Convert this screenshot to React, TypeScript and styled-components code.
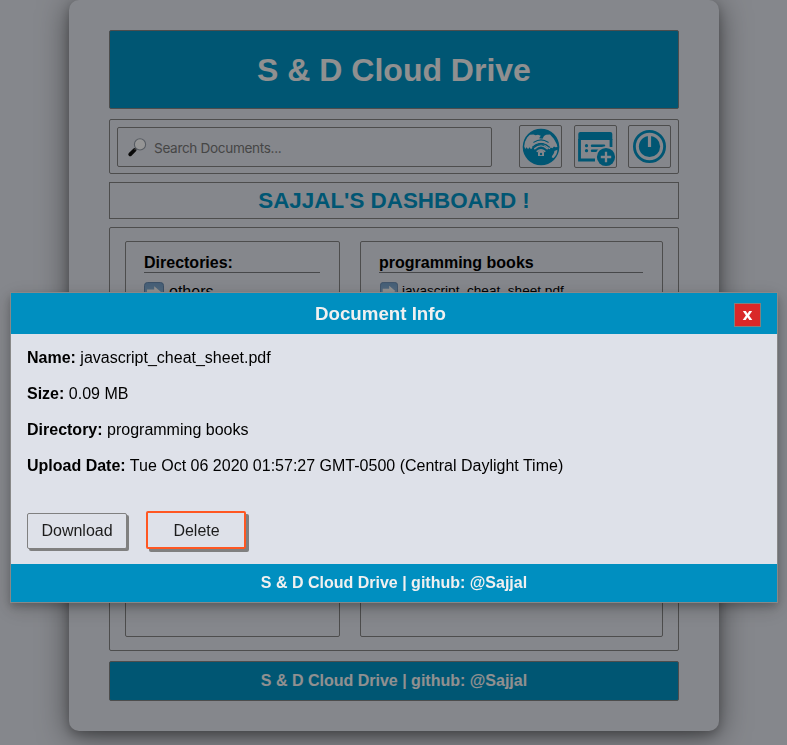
import React from 'react';
import styled, { createGlobalStyle } from 'styled-components';

const BLUE = '#008fc0';
const PAPER = '#dee1e9';

const GlobalStyle = createGlobalStyle`
  * { box-sizing: border-box; }
  html, body { margin: 0; padding: 0; }
  body {
    height: 745px;
    overflow: hidden;
    background: ${PAPER};
    color: #000;
    font: 16px/20px "Liberation Sans", Helvetica, Arial, sans-serif;
  }
  h1, h2, h3, h4, p { margin: 0; }
`;

const Card = styled.main`
  width: 650px;
  height: 731px;
  margin-left: 69px;
  padding: 30px 40px;
  display: flex;
  flex-direction: column;
  background: ${PAPER};
  border-radius: 10px;
  box-shadow: 0 5px 30px rgba(0, 0, 0, 0.5), 0 4px 10px rgba(0, 0, 0, 0.2);
`;

const Box = styled.section`
  border: 1px solid gray;
  border-radius: 2px;
`;

const Banner = styled(Box).attrs({ as: 'header' })`
  height: 79px;
  display: flex;
  align-items: center;
  justify-content: center;
  background: ${BLUE};
  color: #f0f0f0;
`;

const SiteTitle = styled.h1`
  font-size: 32px;
  line-height: 38px;
`;

const Toolbar = styled(Box)`
  height: 55px;
  margin-top: 10px;
  padding: 0 7px;
  display: flex;
  align-items: center;
`;

const Search = styled.label`
  width: 375px;
  height: 40px;
  margin-right: auto;
  padding-left: 9px;
  display: flex;
  align-items: center;
  gap: 7px;
  border: 1px solid gray;
  border-radius: 2px;
`;

const SearchInput = styled.input`
  flex: 1;
  padding: 2px 0 0;
  border: 0;
  outline: 0;
  background: transparent;
  font: 13.6px/20px Inter, sans-serif;
  letter-spacing: -0.34px;
  &::placeholder { color: #757575; opacity: 1; }
`;

const Tools = styled.nav`
  display: grid;
  grid-template-columns: 43px 43px 43px;
  column-gap: 11.5px;
`;

const ToolButton = styled.button`
  height: 43px;
  padding: 0;
  display: grid;
  place-items: center;
  border: 1px solid gray;
  border-radius: 2px;
  background: transparent;
`;

const Dashboard = styled(Box)`
  height: 37px;
  margin-top: 8px;
  border-radius: 0;
  text-align: center;
`;

const DashboardTitle = styled.h2`
  font-size: 22.4px;
  line-height: 35px;
  color: ${BLUE};
`;

const Panels = styled(Box)`
  height: 424px;
  margin-top: 8px;
  padding: 13px 15px;
  display: grid;
  grid-template-columns: 215px 303px;
  gap: 20px;
`;

const Panel = styled(Box)`
  padding: 12px 18px;
`;

const PanelTitle = styled.h4`
  height: 19px;
  width: calc(100% - 1px);
  line-height: 18px;
  border-bottom: 1px solid #77787c;
`;

const Entry = styled.div<{ $small?: boolean }>`
  margin-top: ${(p) => (p.$small ? 7 : 8)}px;
  padding-left: ${(p) => (p.$small ? 1 : 0)}px;
  display: flex;
  align-items: center;
  gap: ${(p) => (p.$small ? 4 : 5)}px;
  font-size: ${(p) => (p.$small ? 13.6 : 16)}px;
  line-height: 20px;
`;

const EntryName = styled.span`
  padding-top: 1px;
`;

const Footer = styled(Box).attrs({ as: 'footer' })`
  height: 40px;
  margin-top: 10px;
  background: ${BLUE};
  color: #f0f0f0;
  font-weight: bold;
  line-height: 37px;
  text-align: center;
`;

const Overlay = styled.div`
  position: fixed;
  inset: 0;
  padding: 292px 9px 0 10px;
  background: rgba(0, 0, 0, 0.4);
`;

const Dialog = styled.div`
  height: 311px;
  display: flex;
  flex-direction: column;
  border: 1px solid #888;
  background: ${PAPER};
  box-shadow: 0 4px 8px rgba(0, 0, 0, 0.2), 0 6px 20px rgba(0, 0, 0, 0.19);
`;

const DialogHeader = styled.header`
  height: 41px;
  padding: 0 16px;
  display: grid;
  grid-template-columns: 27px 1fr 27px;
  align-items: center;
  background: ${BLUE};
  color: #f0f0f0;
`;

const DialogTitle = styled.h3`
  grid-column: 2;
  padding-right: 27px;
  font-size: 18.72px;
  line-height: 22px;
  text-align: center;
`;

const CloseButton = styled.button`
  width: 27px;
  height: 24px;
  margin-top: 3px;
  padding: 0;
  border: 1px solid gray;
  background: #d92828;
  color: #fff;
  font: bold 15.5px/20px "DejaVu Sans", sans-serif;
`;

const DialogBody = styled.div`
  flex: 1;
  padding: 15px 16px 0;
`;

const Field = styled.p`
  height: 36px;
  line-height: 18px;
`;

const Actions = styled.div`
  margin-top: 18px;
  display: flex;
  align-items: flex-end;
  gap: 19px;
`;

const ActionButton = styled.button<{ $danger?: boolean }>`
  width: 100px;
  height: ${(p) => (p.$danger ? 38 : 36)}px;
  padding: ${(p) => (p.$danger ? '2px 0 0 1px' : '0')};
  border: ${(p) => (p.$danger ? '2px solid #ff5722' : '1px solid gray')};
  border-radius: 2px;
  background: ${PAPER};
  box-shadow: ${(p) => (p.$danger ? '3px 3px gray' : '2px 2px gray')};
  color: #1c1c1c;
  font: 16px/20px "Liberation Sans", Helvetica, Arial, sans-serif;
`;

const DialogFooter = styled.footer`
  height: 38px;
  background: ${BLUE};
  color: #f0f0f0;
  font-weight: bold;
  line-height: 38px;
  text-align: center;
`;

const LensIcon = () => (
  <svg width="20" height="20" viewBox="0 0 20 20">
    <path d="M3.2 17.3 7.6 13" stroke="#111" strokeWidth="3.8" strokeLinecap="round" />
    <path d="m7.5 12.8 2-2" stroke="#555" strokeWidth="1.8" />
    <circle cx="13" cy="7.4" r="5.6" fill="#f8f8f8" stroke="#929aa5" strokeWidth="1.1" />
    <path d="M9 6c1-2.3 3.5-3 5.5-2" fill="none" stroke="#fff" />
  </svg>
);

const ArrowIcon = ({ size }: { size: number }) => (
  <svg width={size} height={size} viewBox="0 0 20 20">
    <defs>
      <linearGradient id="tile" x2="0" y2="1">
        <stop stopColor="#719bc5" />
        <stop offset="1" stopColor="#a3c5e0" />
      </linearGradient>
    </defs>
    <rect x=".5" y=".5" width="19" height="19" rx="3" fill="url(#tile)" stroke="#6385aa" />
    <path d="M3 7.4h7.2V4.2L17 10l-6.8 5.8v-3.2H3z" fill="#f1f1f1" />
  </svg>
);

const GlobeIcon = () => (
  <svg width="38" height="38" viewBox="0 0 38 38">
    <circle cx="19" cy="19" r="18.3" fill={BLUE} />
    <path
      d="M5.2 9.5 7.8 6.8l3.7-.3 2 .8 2.5-.6 2.8 1.1-1.7 2.5 3.4.4 1.5-2.7 2-1.2 4-.3 3.8 4.3 3 5.5.6 2.7-2 .3-1.4-.8-1.6 1.8-1.7-.7-1 1.6-1.9-1-5-4-6 .1-4.6 3.8-1.2 1.2-1.6-2-1.3 2-1.5-2-1.4 1.8L2.2 18.3l.8-4.5z"
      fill={PAPER}
    />
    <path d="M29.8 29.6c.2-3.2 2.2-2.4 2.6-6.6l3-1.2c0 3.6-1.6 6.3-3.8 8.1z" fill={PAPER} />
    <g fill="none" strokeLinecap="round">
      <path d="M12 14.3c4.4-3 9.6-3 14 0" stroke={BLUE} strokeWidth="1.3" />
      <path d="M10.7 19c5-4.7 11.6-4.7 16.6 0" stroke={BLUE} strokeWidth="1.5" />
      <path d="M10.5 17.4c5-4.7 12-4.7 17 0" stroke={PAPER} strokeWidth="1.6" />
      <path d="M12.8 20.6c3.8-3.5 8.6-3.5 12.4 0M15.2 23.3c2.5-2.1 5.1-2.1 7.6 0" stroke={PAPER} strokeWidth="1.6" />
    </g>
    <path d="M16 28v-2.9a3 3 0 0 1 6 0V28z" fill={PAPER} />
    <circle cx="19" cy="26" r="1.2" fill={BLUE} />
  </svg>
);

const FormIcon = () => (
  <svg width="41" height="41" viewBox="0 0 41 41">
    <path d="M4.5 13v21H20M36 13v8" fill="none" stroke={BLUE} strokeWidth="2.8" />
    <path d="M3.3 14V8a2 2 0 0 1 2-2h30a2 2 0 0 1 2 2v6z" fill={BLUE} />
    <path d="M17 19.7h12M17 24.7h7" stroke={BLUE} strokeWidth="2.5" strokeLinecap="round" />
    <circle cx="11.5" cy="19.7" r="1.6" fill={BLUE} />
    <circle cx="11.5" cy="24.7" r="1.6" fill={BLUE} />
    <circle cx="31" cy="31" r="10.8" fill={PAPER} />
    <circle cx="31" cy="31" r="9.1" fill={BLUE} />
    <path d="M31 25.8v10.4M25.8 31h10.4" stroke={PAPER} strokeWidth="2.3" />
  </svg>
);

const PowerIcon = () => (
  <svg width="33" height="33" viewBox="0 0 33 33">
    <circle cx="16.5" cy="16.5" r="15.1" fill="none" stroke={BLUE} strokeWidth="2.8" />
    <circle cx="16.5" cy="16.5" r="10.6" fill={BLUE} />
    <path d="M16.5 3.5V17" stroke={PAPER} strokeWidth="3.2" />
  </svg>
);

export default function App() {
  return (
    <>
      <GlobalStyle />
      <Card>
        <Banner><SiteTitle>S &amp; D Cloud Drive</SiteTitle></Banner>
        <Toolbar>
          <Search>
            <LensIcon />
            <SearchInput placeholder="Search Documents..." />
          </Search>
          <Tools>
            <ToolButton aria-label="Browse"><GlobeIcon /></ToolButton>
            <ToolButton aria-label="Add"><FormIcon /></ToolButton>
            <ToolButton aria-label="Log out"><PowerIcon /></ToolButton>
          </Tools>
        </Toolbar>
        <Dashboard><DashboardTitle>SAJJAL'S DASHBOARD !</DashboardTitle></Dashboard>
        <Panels>
          <Panel>
            <PanelTitle>Directories:</PanelTitle>
            <Entry><ArrowIcon size={20} /><EntryName>others</EntryName></Entry>
          </Panel>
          <Panel>
            <PanelTitle>programming books</PanelTitle>
            <Entry $small><ArrowIcon size={18} /><EntryName>javascript_cheat_sheet.pdf</EntryName></Entry>
          </Panel>
        </Panels>
        <Footer>S &amp; D Cloud Drive | github: @Sajjal</Footer>
      </Card>
      <Overlay>
        <Dialog role="dialog">
          <DialogHeader>
            <DialogTitle>Document Info</DialogTitle>
            <CloseButton>x</CloseButton>
          </DialogHeader>
          <DialogBody>
            <Field><b>Name:</b> javascript_cheat_sheet.pdf</Field>
            <Field><b>Size:</b> 0.09 MB</Field>
            <Field><b>Directory:</b> programming books</Field>
            <Field><b>Upload Date:</b> Tue Oct 06 2020 01:57:27 GMT-0500 (Central Daylight Time)</Field>
            <Actions>
              <ActionButton>Download</ActionButton>
              <ActionButton $danger>Delete</ActionButton>
            </Actions>
          </DialogBody>
          <DialogFooter>S &amp; D Cloud Drive | github: @Sajjal</DialogFooter>
        </Dialog>
      </Overlay>
    </>
  );
}
